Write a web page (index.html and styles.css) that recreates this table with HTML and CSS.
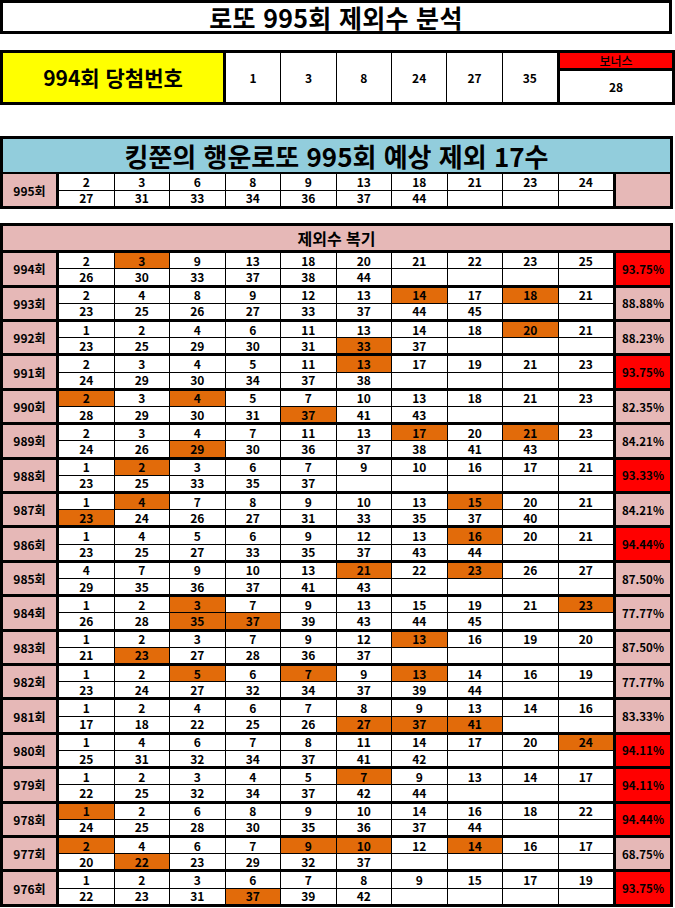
FILE: index.html
```html
<!DOCTYPE html>
<html lang="ko">
<head>
<meta charset="utf-8">
<title>로또 995회 제외수 분석</title>
<link rel="stylesheet" href="styles.css">
</head>
<body>
<div class="title">로또 995회 제외수 분석</div>

<div class="win">
  <div class="win-label">994회 당첨번호</div>
  <div class="win-nums"><div>1</div><div>3</div><div>8</div><div>24</div><div>27</div><div>35</div></div>
  <div class="bonus"><div class="bonus-h">보너스</div><div class="bonus-n">28</div></div>
</div>

<div class="pred">
  <div class="pred-h">킹쭌의 행운로또 995회 예상 제외 17수</div>
  <div class="row">
    <div class="lbl">995회</div>
    <div class="nums"><div>2</div><div>3</div><div>6</div><div>8</div><div>9</div><div>13</div><div>18</div><div>21</div><div>23</div><div>24</div><div>27</div><div>31</div><div>33</div><div>34</div><div>36</div><div>37</div><div>44</div><div></div><div></div><div></div></div>
    <div class="pct"></div>
  </div>
</div>

<div class="review">
  <div class="review-h">제외수 복기</div>
  <div class="row"><div class="lbl">994회</div><div class="nums"><div>2</div><div class="o">3</div><div>9</div><div>13</div><div>18</div><div>20</div><div>21</div><div>22</div><div>23</div><div>25</div><div>26</div><div>30</div><div>33</div><div>37</div><div>38</div><div>44</div><div></div><div></div><div></div><div></div></div><div class="pct hi">93.75%</div></div>
  <div class="row"><div class="lbl">993회</div><div class="nums"><div>2</div><div>4</div><div>8</div><div>9</div><div>12</div><div>13</div><div class="o">14</div><div>17</div><div class="o">18</div><div>21</div><div>23</div><div>25</div><div>26</div><div>27</div><div>33</div><div>37</div><div>44</div><div>45</div><div></div><div></div></div><div class="pct">88.88%</div></div>
  <div class="row"><div class="lbl">992회</div><div class="nums"><div>1</div><div>2</div><div>4</div><div>6</div><div>11</div><div>13</div><div>14</div><div>18</div><div class="o">20</div><div>21</div><div>23</div><div>25</div><div>29</div><div>30</div><div>31</div><div class="o">33</div><div>37</div><div></div><div></div><div></div></div><div class="pct">88.23%</div></div>
  <div class="row"><div class="lbl">991회</div><div class="nums"><div>2</div><div>3</div><div>4</div><div>5</div><div>11</div><div class="o">13</div><div>17</div><div>19</div><div>21</div><div>23</div><div>24</div><div>29</div><div>30</div><div>34</div><div>37</div><div>38</div><div></div><div></div><div></div><div></div></div><div class="pct hi">93.75%</div></div>
  <div class="row"><div class="lbl">990회</div><div class="nums"><div class="o">2</div><div>3</div><div class="o">4</div><div>5</div><div>7</div><div>10</div><div>13</div><div>18</div><div>21</div><div>23</div><div>28</div><div>29</div><div>30</div><div>31</div><div class="o">37</div><div>41</div><div>43</div><div></div><div></div><div></div></div><div class="pct">82.35%</div></div>
  <div class="row"><div class="lbl">989회</div><div class="nums"><div>2</div><div>3</div><div>4</div><div>7</div><div>11</div><div>13</div><div class="o">17</div><div>20</div><div class="o">21</div><div>23</div><div>24</div><div>26</div><div class="o">29</div><div>30</div><div>36</div><div>37</div><div>38</div><div>41</div><div>43</div><div></div></div><div class="pct">84.21%</div></div>
  <div class="row"><div class="lbl">988회</div><div class="nums"><div>1</div><div class="o">2</div><div>3</div><div>6</div><div>7</div><div>9</div><div>10</div><div>16</div><div>17</div><div>21</div><div>23</div><div>25</div><div>33</div><div>35</div><div>37</div><div></div><div></div><div></div><div></div><div></div></div><div class="pct hi">93.33%</div></div>
  <div class="row"><div class="lbl">987회</div><div class="nums"><div>1</div><div class="o">4</div><div>7</div><div>8</div><div>9</div><div>10</div><div>13</div><div class="o">15</div><div>20</div><div>21</div><div class="o">23</div><div>24</div><div>26</div><div>27</div><div>31</div><div>33</div><div>35</div><div>37</div><div>40</div><div></div></div><div class="pct">84.21%</div></div>
  <div class="row"><div class="lbl">986회</div><div class="nums"><div>1</div><div>4</div><div>5</div><div>6</div><div>9</div><div>12</div><div>13</div><div class="o">16</div><div>20</div><div>21</div><div>23</div><div>25</div><div>27</div><div>33</div><div>35</div><div>37</div><div>43</div><div>44</div><div></div><div></div></div><div class="pct hi">94.44%</div></div>
  <div class="row"><div class="lbl">985회</div><div class="nums"><div>4</div><div>7</div><div>9</div><div>10</div><div>13</div><div class="o">21</div><div>22</div><div class="o">23</div><div>26</div><div>27</div><div>29</div><div>35</div><div>36</div><div>37</div><div>41</div><div>43</div><div></div><div></div><div></div><div></div></div><div class="pct">87.50%</div></div>
  <div class="row"><div class="lbl">984회</div><div class="nums"><div>1</div><div>2</div><div class="o">3</div><div>7</div><div>9</div><div>13</div><div>15</div><div>19</div><div>21</div><div class="o">23</div><div>26</div><div>28</div><div class="o">35</div><div class="o">37</div><div>39</div><div>43</div><div>44</div><div>45</div><div></div><div></div></div><div class="pct">77.77%</div></div>
  <div class="row"><div class="lbl">983회</div><div class="nums"><div>1</div><div>2</div><div>3</div><div>7</div><div>9</div><div>12</div><div class="o">13</div><div>16</div><div>19</div><div>20</div><div>21</div><div class="o">23</div><div>27</div><div>28</div><div>36</div><div>37</div><div></div><div></div><div></div><div></div></div><div class="pct">87.50%</div></div>
  <div class="row"><div class="lbl">982회</div><div class="nums"><div>1</div><div>2</div><div class="o">5</div><div>6</div><div class="o">7</div><div>9</div><div class="o">13</div><div>14</div><div>16</div><div>19</div><div>23</div><div>24</div><div>27</div><div>32</div><div>34</div><div>37</div><div>39</div><div>44</div><div></div><div></div></div><div class="pct">77.77%</div></div>
  <div class="row"><div class="lbl">981회</div><div class="nums"><div>1</div><div>2</div><div>4</div><div>6</div><div>7</div><div>8</div><div>9</div><div>13</div><div>14</div><div>16</div><div>17</div><div>18</div><div>22</div><div>25</div><div>26</div><div class="o">27</div><div class="o">37</div><div class="o">41</div><div></div><div></div></div><div class="pct">83.33%</div></div>
  <div class="row"><div class="lbl">980회</div><div class="nums"><div>1</div><div>4</div><div>6</div><div>7</div><div>8</div><div>11</div><div>14</div><div>17</div><div>20</div><div class="o">24</div><div>25</div><div>31</div><div>32</div><div>34</div><div>37</div><div>41</div><div>42</div><div></div><div></div><div></div></div><div class="pct hi">94.11%</div></div>
  <div class="row"><div class="lbl">979회</div><div class="nums"><div>1</div><div>2</div><div>3</div><div>4</div><div>5</div><div class="o">7</div><div>9</div><div>13</div><div>14</div><div>17</div><div>22</div><div>25</div><div>32</div><div>34</div><div>37</div><div>42</div><div>44</div><div></div><div></div><div></div></div><div class="pct hi">94.11%</div></div>
  <div class="row"><div class="lbl">978회</div><div class="nums"><div class="o">1</div><div>2</div><div>6</div><div>8</div><div>9</div><div>10</div><div>14</div><div>16</div><div>18</div><div>22</div><div>24</div><div>25</div><div>28</div><div>30</div><div>35</div><div>36</div><div>37</div><div>44</div><div></div><div></div></div><div class="pct hi">94.44%</div></div>
  <div class="row"><div class="lbl">977회</div><div class="nums"><div class="o">2</div><div>4</div><div>6</div><div>7</div><div class="o">9</div><div class="o">10</div><div>12</div><div class="o">14</div><div>16</div><div>17</div><div>20</div><div class="o">22</div><div>23</div><div>29</div><div>32</div><div>37</div><div></div><div></div><div></div><div></div></div><div class="pct">68.75%</div></div>
  <div class="row"><div class="lbl">976회</div><div class="nums"><div>1</div><div>2</div><div>3</div><div>6</div><div>7</div><div>8</div><div>9</div><div>15</div><div>17</div><div>19</div><div>22</div><div>23</div><div>31</div><div class="o">37</div><div>39</div><div>42</div><div></div><div></div><div></div><div></div></div><div class="pct hi">93.75%</div></div>
</div>
</body>
</html>
```

FILE: styles.css
```css
* { box-sizing: border-box; }

body {
  margin: 0;
  background: #fff;
  color: #000;
  font-family: "Noto Sans CJK KR", "Noto Sans", sans-serif;
  font-weight: 700;
}

.title {
  width: 672px;
  height: 34px;
  border: 3px solid #000;
  display: flex;
  align-items: center;
  justify-content: center;
  font-size: 25px;
  line-height: 28px;
  letter-spacing: 0.3px;
}

/* winning numbers */
.win {
  margin-top: 16px;
  width: 675px;
  height: 55px;
  border: 3px solid #000;
  background: #000;
  display: grid;
  grid-template-columns: 220px 331px 112px;
  column-gap: 3px;
}

.win-label {
  background: #ffff00;
  display: flex;
  align-items: center;
  justify-content: center;
  font-size: 21px;
  line-height: 1;
}

.win-nums {
  display: grid;
  grid-template-columns: repeat(6, 1fr);
  column-gap: 1px;
}

.win-nums > div {
  background: #fff;
  display: flex;
  align-items: center;
  justify-content: center;
  font-size: 12px;
}

.bonus {
  display: grid;
  grid-template-rows: 15px 31px;
  row-gap: 3px;
}

.bonus-h {
  background: #ff0000;
  font-size: 12px;
  font-weight: 500;
  display: flex;
  align-items: center;
  justify-content: center;
  line-height: 1;
}

.bonus-n {
  background: #fff;
  display: flex;
  align-items: center;
  justify-content: center;
  font-size: 12px;
}

/* prediction */
.pred {
  margin-top: 31px;
  width: 673px;
  border: 3px solid #000;
  background: #000;
  display: grid;
  grid-template-rows: 33px 32px;
  row-gap: 2px;
}

.pred-h {
  background: #92cddc;
  display: flex;
  align-items: center;
  justify-content: center;
  font-size: 26px;
  line-height: 1;
}

.row {
  display: grid;
  grid-template-columns: 53px 554px 54px;
  column-gap: 3px;
  background: #000;
}

.lbl {
  background: #e6b8b7;
  display: flex;
  align-items: center;
  justify-content: center;
  font-size: 12px;
}

.pct {
  background: #e6b8b7;
  display: flex;
  align-items: center;
  justify-content: center;
  font-size: 11.5px;
}

.pct.hi { background: #ff0000; }

.nums {
  display: grid;
  grid-template-columns: repeat(10, 1fr);
  grid-template-rows: 1fr 1fr;
  gap: 1px;
}

.nums > div {
  background: #fff;
  display: flex;
  align-items: center;
  justify-content: center;
  font-size: 12px;
  line-height: 1;
}

.nums > div.o { background: #e26b0a; }

/* review */
.review {
  margin-top: 14px;
  width: 673px;
  border: 3px solid #000;
  background: #000;
  display: grid;
  grid-template-rows: 24.3px;
  grid-auto-rows: 31.4px;
  row-gap: 3px;
}

.review-h {
  background: #e6b8b7;
  display: flex;
  align-items: center;
  justify-content: center;
  font-size: 16px;
  line-height: 1;
}
```
